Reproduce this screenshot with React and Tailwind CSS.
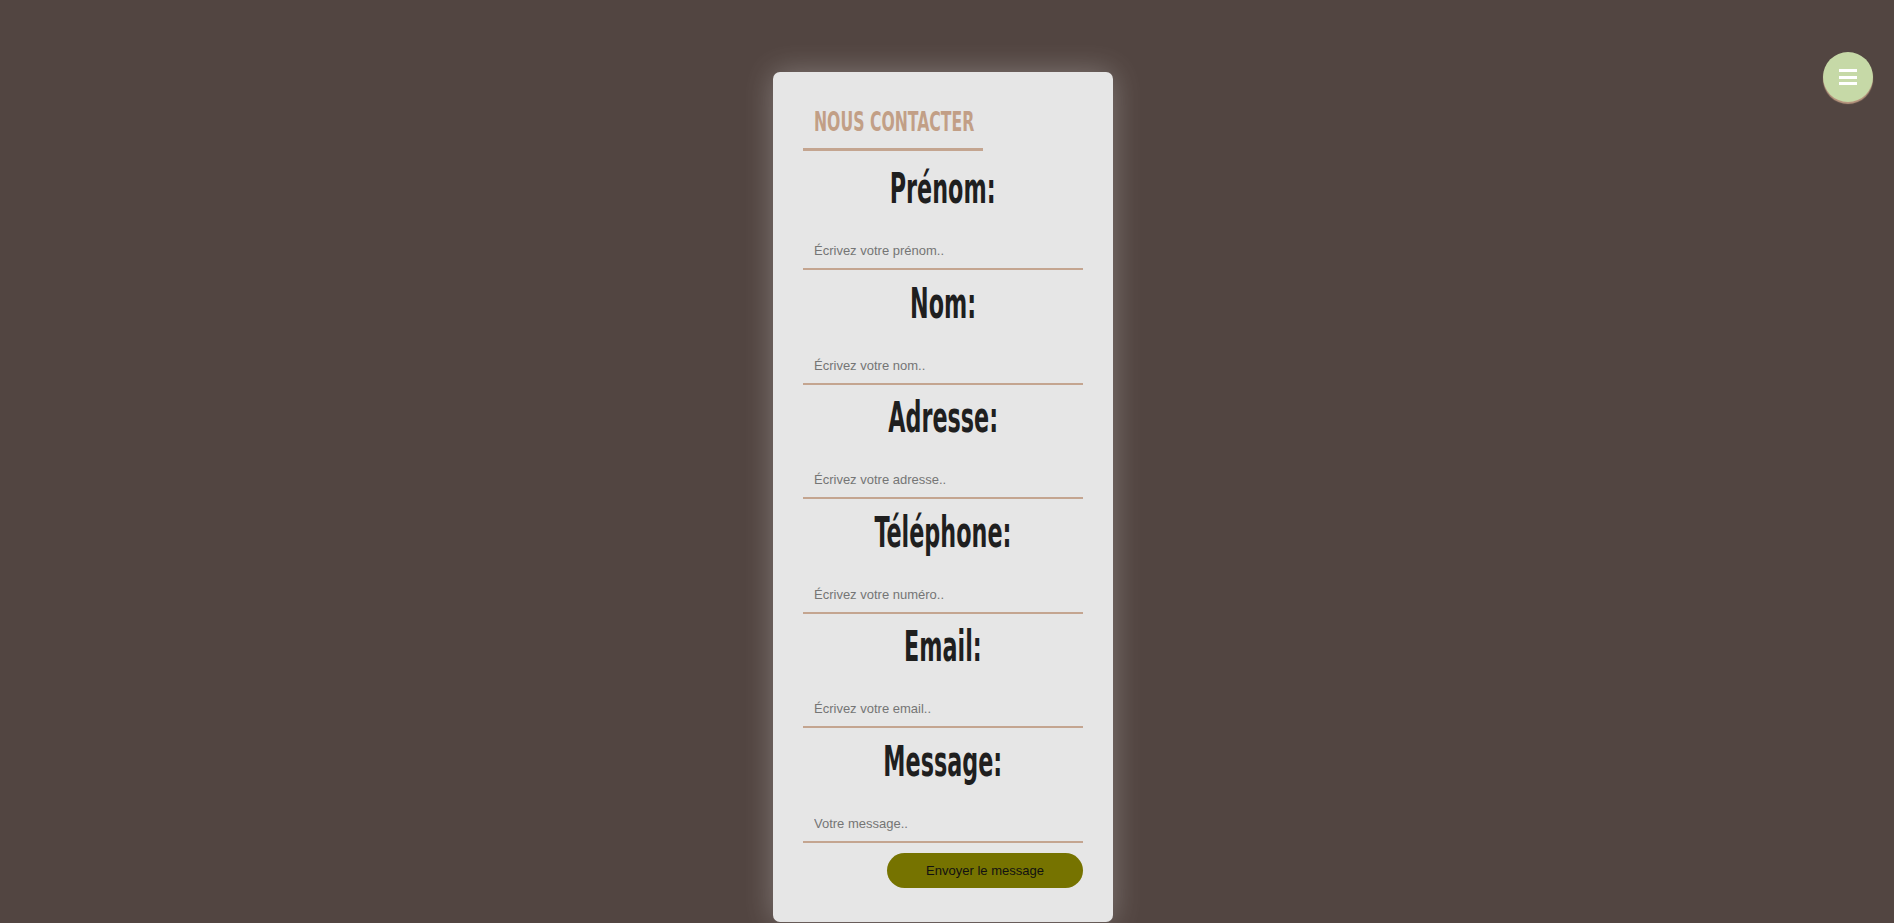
import React from 'react';

const fields = [
    { label: 'Prénom:', placeholder: 'Écrivez votre prénom..' },
    { label: 'Nom:', placeholder: 'Écrivez votre nom..' },
    { label: 'Adresse:', placeholder: 'Écrivez votre adresse..' },
    { label: 'Téléphone:', placeholder: 'Écrivez votre numéro..' },
    { label: 'Email:', placeholder: 'Écrivez votre email..' },
    { label: 'Message:', placeholder: 'Votre message..' },
];

const Field = ({ label, placeholder }) => (
    <div className="flex flex-col mb-[8.5px]">
        <div className="h-[50px] flex justify-center">
            <span className="inline-block scale-x-[0.59] text-[42px] leading-[50px] font-bold text-[#1f1f1f] whitespace-nowrap font-['DejaVu_Sans_Condensed','DejaVu_Sans',sans-serif]">
                {label}
            </span>
        </div>
        <input
            type="text"
            placeholder={placeholder}
            className="mt-[22px] h-[34px] w-full bg-transparent border-b-2 border-[#c4a590] px-[11px] pb-[3px] text-[13px] text-[#333] outline-none placeholder:text-[#757575] font-['Liberation_Sans',Arial,sans-serif]"
        />
    </div>
);

export default function App() {
    return (
        <div className="min-h-[923px] w-full bg-[#524541] flex justify-center pr-[8px]">
            {/* Contact card */}
            <div className="mt-[72px] mb-[2px] w-[340px] bg-[#e6e6e6] rounded-[7px] px-[30px] pt-[34px] pb-[34px] shadow-[0_0_30px_rgba(255,255,255,0.28)] flex flex-col">
                <div className="w-[180px] border-b-[3px] border-[#c4a590] px-[11px] pb-[9.5px] mb-[13.5px]">
                    <span className="inline-block origin-left scale-x-[0.67] text-[26px] leading-[32px] font-bold text-[#c29f86] whitespace-nowrap font-['DejaVu_Sans_Condensed','DejaVu_Sans',sans-serif]">
                        NOUS CONTACTER
                    </span>
                </div>

                {fields.map((f) => (
                    <Field key={f.label} label={f.label} placeholder={f.placeholder} />
                ))}

                <div className="flex justify-end mt-[2px]">
                    <button className="w-[196px] h-[35px] rounded-full bg-[#767300] text-[13px] text-[#111] font-['Liberation_Sans',Arial,sans-serif]">
                        Envoyer le message
                    </button>
                </div>
            </div>

            {/* Menu button */}
            <button className="fixed top-[52px] right-[21px] w-[50px] h-[50px] rounded-full bg-[#c6d9a7] shadow-[0_2px_1px_#b8977f] flex flex-col items-center justify-center gap-[3.5px]">
                <span className="block w-[18px] h-[3px] bg-white" />
                <span className="block w-[18px] h-[3px] bg-white" />
                <span className="block w-[18px] h-[3px] bg-white" />
            </button>
        </div>
    );
}
